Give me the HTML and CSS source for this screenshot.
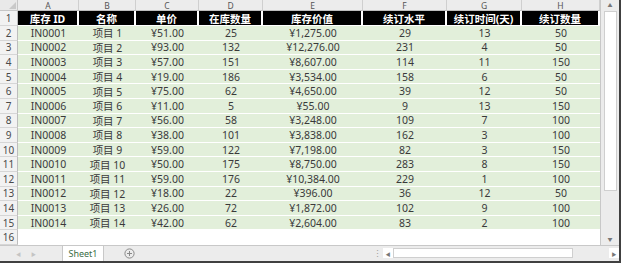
FILE: index.html
```html
<!DOCTYPE html>
<html lang="zh">
<head>
<meta charset="utf-8">
<link rel="stylesheet" href="styles.css">
</head>
<body>
<div class="window">
  <div class="main">
    <div class="sheet">
      <div class="corner"><span class="tri"></span></div>
      <div class="colh">A</div><div class="colh">B</div><div class="colh">C</div><div class="colh">D</div><div class="colh">E</div><div class="colh">F</div><div class="colh">G</div><div class="colh">H</div>

      <div class="rowh">1</div>
      <div class="hd">库存 ID</div><div class="hd">名称</div><div class="hd">单价</div><div class="hd">在库数量</div><div class="hd">库存价值</div><div class="hd">续订水平</div><div class="hd">续订时间(天)</div><div class="hd">续订数量</div>

      <div class="rowh">2</div><div class="c">IN0001</div><div class="c">项目 1</div><div class="c">¥51.00</div><div class="c">25</div><div class="c">¥1,275.00</div><div class="c">29</div><div class="c">13</div><div class="c">50</div>
      <div class="rowh">3</div><div class="c">IN0002</div><div class="c">项目 2</div><div class="c">¥93.00</div><div class="c">132</div><div class="c">¥12,276.00</div><div class="c">231</div><div class="c">4</div><div class="c">50</div>
      <div class="rowh">4</div><div class="c">IN0003</div><div class="c">项目 3</div><div class="c">¥57.00</div><div class="c">151</div><div class="c">¥8,607.00</div><div class="c">114</div><div class="c">11</div><div class="c">150</div>
      <div class="rowh">5</div><div class="c">IN0004</div><div class="c">项目 4</div><div class="c">¥19.00</div><div class="c">186</div><div class="c">¥3,534.00</div><div class="c">158</div><div class="c">6</div><div class="c">50</div>
      <div class="rowh">6</div><div class="c">IN0005</div><div class="c">项目 5</div><div class="c">¥75.00</div><div class="c">62</div><div class="c">¥4,650.00</div><div class="c">39</div><div class="c">12</div><div class="c">50</div>
      <div class="rowh">7</div><div class="c">IN0006</div><div class="c">项目 6</div><div class="c">¥11.00</div><div class="c">5</div><div class="c">¥55.00</div><div class="c">9</div><div class="c">13</div><div class="c">150</div>
      <div class="rowh">8</div><div class="c">IN0007</div><div class="c">项目 7</div><div class="c">¥56.00</div><div class="c">58</div><div class="c">¥3,248.00</div><div class="c">109</div><div class="c">7</div><div class="c">100</div>
      <div class="rowh">9</div><div class="c">IN0008</div><div class="c">项目 8</div><div class="c">¥38.00</div><div class="c">101</div><div class="c">¥3,838.00</div><div class="c">162</div><div class="c">3</div><div class="c">100</div>
      <div class="rowh">10</div><div class="c">IN0009</div><div class="c">项目 9</div><div class="c">¥59.00</div><div class="c">122</div><div class="c">¥7,198.00</div><div class="c">82</div><div class="c">3</div><div class="c">150</div>
      <div class="rowh">11</div><div class="c">IN0010</div><div class="c">项目 10</div><div class="c">¥50.00</div><div class="c">175</div><div class="c">¥8,750.00</div><div class="c">283</div><div class="c">8</div><div class="c">150</div>
      <div class="rowh">12</div><div class="c">IN0011</div><div class="c">项目 11</div><div class="c">¥59.00</div><div class="c">176</div><div class="c">¥10,384.00</div><div class="c">229</div><div class="c">1</div><div class="c">100</div>
      <div class="rowh">13</div><div class="c">IN0012</div><div class="c">项目 12</div><div class="c">¥18.00</div><div class="c">22</div><div class="c">¥396.00</div><div class="c">36</div><div class="c">12</div><div class="c">50</div>
      <div class="rowh">14</div><div class="c">IN0013</div><div class="c">项目 13</div><div class="c">¥26.00</div><div class="c">72</div><div class="c">¥1,872.00</div><div class="c">102</div><div class="c">9</div><div class="c">100</div>
      <div class="rowh">15</div><div class="c">IN0014</div><div class="c">项目 14</div><div class="c">¥42.00</div><div class="c">62</div><div class="c">¥2,604.00</div><div class="c">83</div><div class="c">2</div><div class="c">100</div>
      <div class="rowh">16</div><div class="e"></div><div class="e"></div><div class="e"></div><div class="e"></div><div class="e"></div><div class="e"></div><div class="e"></div><div class="e"></div>
    </div>
    <div class="vscroll">
      <div class="arrow up">▲</div>
      <div class="vthumb"></div>
      <div class="vtrack"></div>
      <div class="arrow down">▼</div>
    </div>
  </div>
  <div class="tabbar">
    <div class="nav"><span>◀</span><span>▶</span></div>
    <div class="tab">Sheet1</div>
    <div class="add">
      <svg width="11" height="11" viewBox="0 0 11 11"><circle cx="5.5" cy="5.5" r="4.6" fill="none" stroke="#8a8a8a" stroke-width="1"/><path d="M5.5 3v5M3 5.5h5" stroke="#8a8a8a" stroke-width="1"/></svg>
    </div>
    <div class="spacer"></div>
    <div class="dots">⋮</div>
    <div class="hscroll">
      <div class="harrow">◀</div>
      <div class="hthumb"></div>
      <div class="htrack"></div>
      <div class="harrow">▶</div>
    </div>
  </div>
</div>
</body>
</html>
```
FILE: styles.css
```css
html, body {
  margin: 0;
  padding: 0;
  background: #ffffff;
}
body {
  font-family: "Noto Sans", "Noto Sans CJK SC", sans-serif;
}
.window {
  width: 619px;
  height: 261px;
  border-right: 2px solid #404040;
  border-bottom: 2px solid #404040;
  display: flex;
  flex-direction: column;
  overflow: hidden;
}
.main {
  display: flex;
  height: 245px;
}
.sheet {
  display: grid;
  grid-template-columns: 18px 61px 57px 63px 64px 100px 84px 75px 78px;
  grid-template-rows: 11px 15px repeat(15, 14.6px);
  width: 600px;
  background: #ffffff;
}
.corner {
  background: #e9e9e9;
  border-right: 1px solid #c6c6c6;
  border-bottom: 1px solid #c6c6c6;
  position: relative;
}
.tri {
  position: absolute;
  right: 1px;
  bottom: 1px;
  width: 0;
  height: 0;
  border-left: 7px solid transparent;
  border-bottom: 7px solid #c9c9c9;
}
.colh {
  background: #ececec;
  border-right: 1px solid #cfcfcf;
  border-bottom: 1px solid #bdbdbd;
  font-size: 8.5px;
  line-height: 9px;
  color: #555555;
  display: flex;
  align-items: center;
  justify-content: center;
}
.rowh {
  background: #f2f2f2;
  border-right: 1px solid #bdbdbd;
  border-bottom: 1px solid #d6d6d6;
  font-size: 10px;
  color: #4a4a4a;
  display: flex;
  align-items: center;
  justify-content: center;
}
.hd {
  background: #000000;
  color: #ffffff;
  font-weight: bold;
  font-size: 10.5px;
  border-right: 2px solid #ffffff;
  border-bottom: 1px solid #ffffff;
  display: flex;
  align-items: center;
  justify-content: center;
  white-space: nowrap;
}
.c {
  background: #e2efda;
  color: #3a3a3a;
  font-size: 10.5px;
  border-bottom: 1px solid #ffffff;
  display: flex;
  align-items: center;
  justify-content: center;
  white-space: nowrap;
}
.e {
  background: #ffffff;
}
.vscroll {
  width: 19px;
  background: #ececec;
  border-left: 1px solid #c8c8c8;
  display: flex;
  flex-direction: column;
  align-items: center;
}
.arrow {
  font-size: 5px;
  color: #777777;
  height: 11px;
  line-height: 11px;
}
.vthumb {
  width: 13px;
  height: 180px;
  background: #ffffff;
  border: 1px solid #cfcfcf;
  box-sizing: border-box;
}
.vtrack {
  flex: 1;
}
.tabbar {
  height: 16px;
  background: #ececec;
  border-top: 1px solid #c8c8c8;
  display: flex;
  align-items: stretch;
  font-size: 9px;
}
.nav {
  width: 62px;
  display: flex;
  gap: 10px;
  align-items: center;
  padding-left: 16px;
  box-sizing: border-box;
  color: #c4c4c4;
  font-size: 5px;
}
.tab {
  width: 40px;
  background: #ffffff;
  color: #3b6e46;
  border-left: 1px solid #c8c8c8;
  border-right: 1px solid #c8c8c8;
  display: flex;
  align-items: center;
  justify-content: center;
  font-size: 9px;
}
.add {
  width: 50px;
  display: flex;
  align-items: center;
  justify-content: center;
}
.spacer {
  flex: 1;
}
.dots {
  width: 12px;
  color: #a0a0a0;
  font-size: 9px;
  display: flex;
  align-items: center;
  justify-content: center;
}
.hscroll {
  width: 236px;
  display: flex;
  align-items: center;
}
.harrow {
  width: 10px;
  height: 10px;
  font-size: 5px;
  color: #777777;
  display: flex;
  align-items: center;
  justify-content: center;
  background: #ffffff;
}
.hthumb {
  width: 180px;
  height: 10px;
  background: #ffffff;
  border: 1px solid #cfcfcf;
  box-sizing: border-box;
}
.htrack {
  flex: 1;
}
```
